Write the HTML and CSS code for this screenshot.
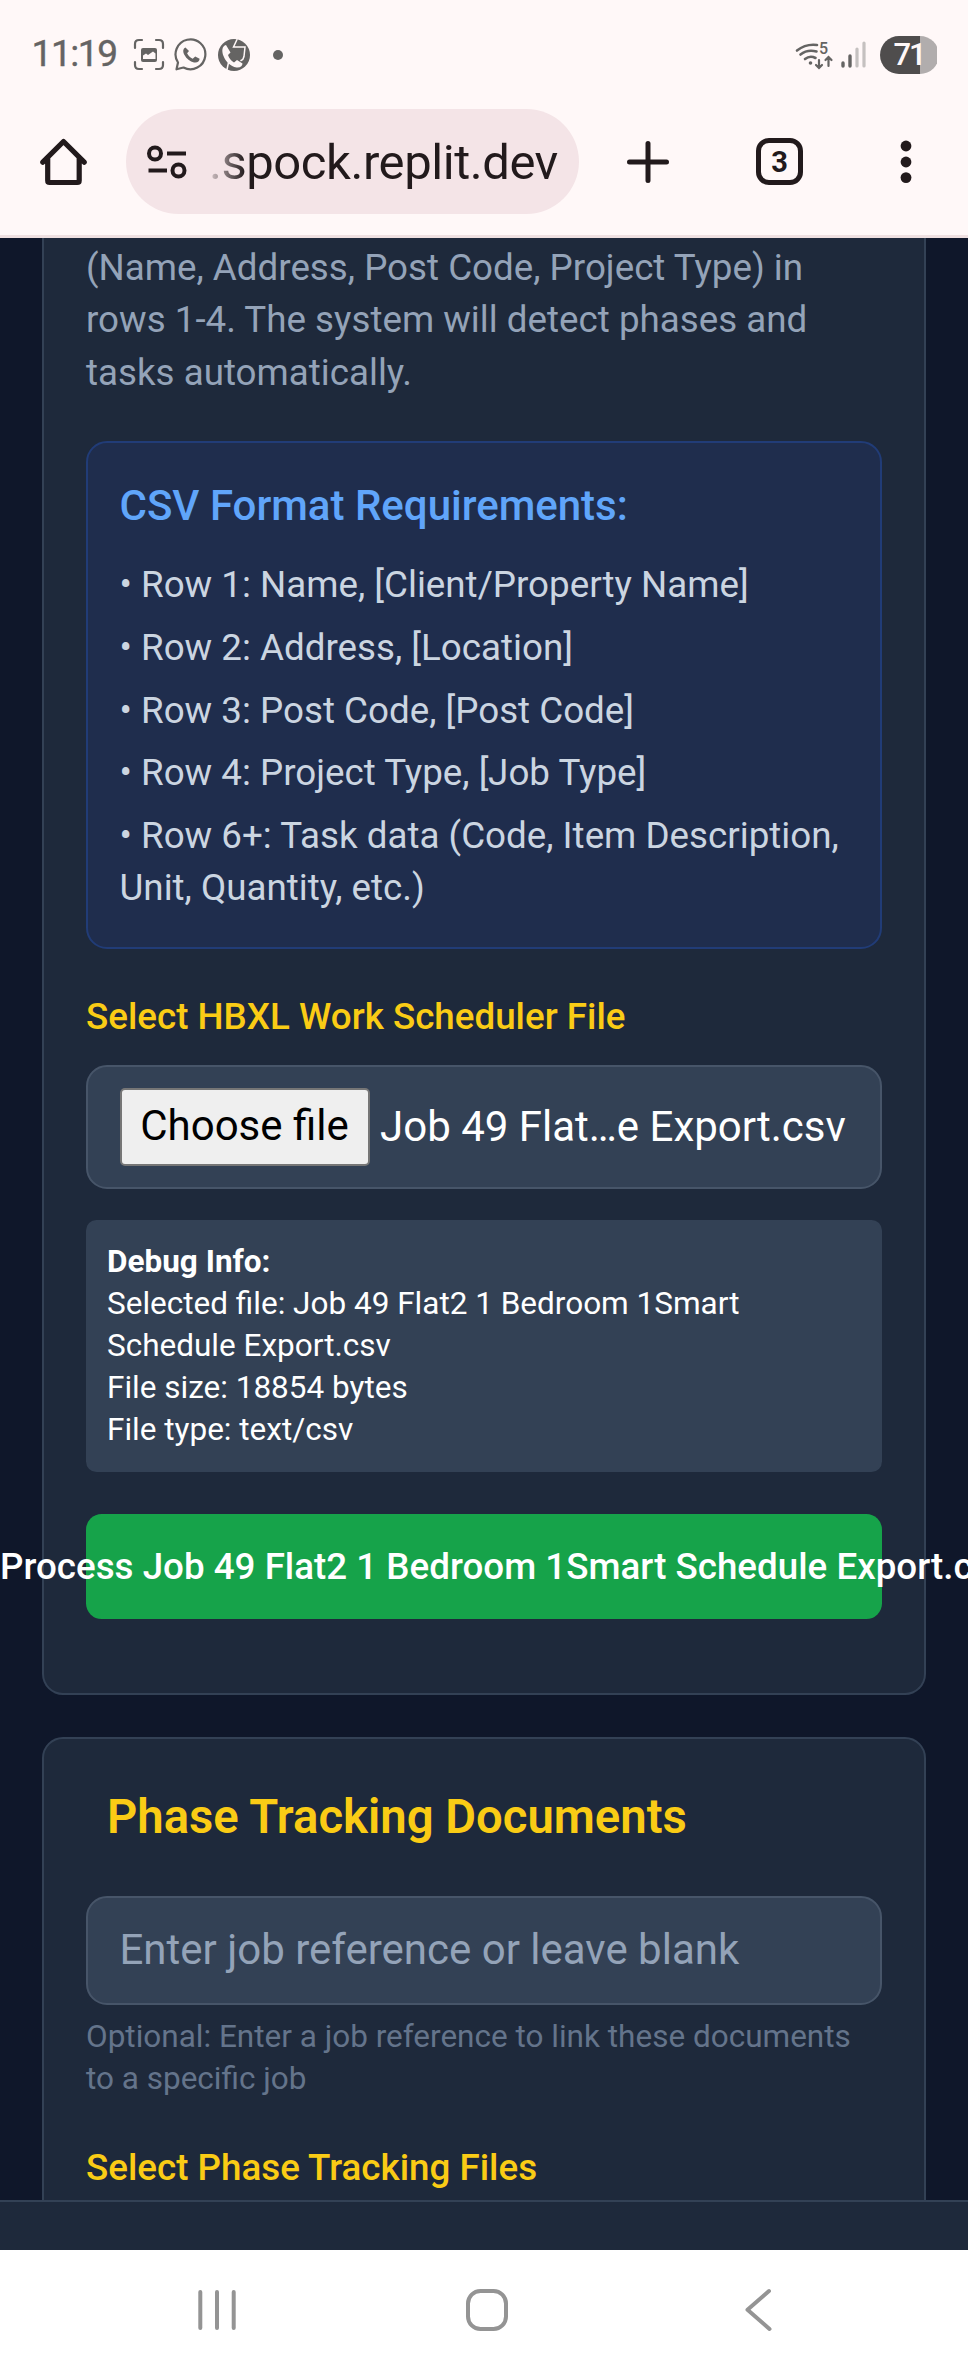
FILE: index.html
```html
<!DOCTYPE html>
<html lang="en">
<head>
<meta charset="utf-8">
<meta name="viewport" content="width=device-width, initial-scale=1">
<title>Upload</title>
<link rel="stylesheet" href="styles.css">
</head>
<body>
<div class="screen">
  <header class="chrome">
    <div class="status">
      <span class="clock">11:19</span>
      <svg class="s-left" width="152" height="34" viewBox="0 0 152 34" fill="none" stroke="#656463" stroke-width="2.2" stroke-linecap="round">
        <path d="M2 10V6q0-4 4-4h3M23 2h3q4 0 4 4v4M30 24v3q0 4-4 4h-3M9 31H6q-4 0-4-4v-3"/>
        <rect x="8" y="10" width="16" height="14" rx="2" fill="#656463" stroke="none"/>
        <path d="M10 21v-3.500l3-2 2 1.500 5-3.500 2.500 2V21z" fill="#fff8f8" stroke="none"/>
        <path d="M43.500 31.300 45 24.500A14.900 14.900 0 1 1 50.500 29.500z" stroke-linejoin="round"/>
        <path d="M52.500 9.500c-2.500 1-3 4-1 7.500 2 3.800 5.500 6.500 9.500 7.500 3.500.6 5.500-1.200 5.600-3.800l-4.400-2.300-2.500 2.400c-2.500-1-4.500-3-5.600-5.500l1.900-2.300z" fill="#656463" stroke="none"/>
        <circle cx="101" cy="17" r="16" fill="#656463" stroke="none"/>
        <path d="M93 7c-4 1-4.500 6-2.500 11 2 5.500 7 10.500 13 11.500 4 .5 6-2 6-4l-5.500-3.500-3 2.500c-3-1.500-5-4.500-6-7.500l2.500-2.500z" fill="#fff8f8" stroke="none"/>
        <path d="M104 1.500l-3.500 7.500h11.500l-1 9.500c-.5 2.500-1.500 3.500-3 4M95.500 24.500l-1.500 7" stroke="#fff8f8" stroke-width="1.500"/>
        <circle cx="145" cy="17" r="5" fill="#656463" stroke="none"/>
      </svg>
      <svg class="s-right" width="142" height="38" viewBox="0 0 142 38" fill="none" stroke="#656463" stroke-width="2.600" stroke-linecap="round">
        <path d="M2 14.500q9-7 20-5.500M5.500 18.500q7-5.500 16-3M10 23q5-4 10.500-1"/>
        <circle cx="15.500" cy="27" r="1.800" fill="#656463" stroke="none"/>
        <path d="M24 24v7.500M21 29l3 3 3-3M33.500 30v-8M30.500 24l3-3 3 3" stroke-width="2.200"/>
        <text x="24" y="18" font-size="16" font-weight="500" fill="#656463" stroke="none">5</text>
        <path d="M48 27v3M55 20v10" stroke-width="3.400"/>
        <path d="M62 13v17M69 7v23" stroke="#c5c1c0" stroke-width="3.200"/>
        <path d="M104 0h21v38h-21a19 19 0 0 1 0-38z" fill="#4f4d4d" stroke="none"/>
        <path d="M125 0a19 19 0 0 1 0 38z" fill="#b1adad" stroke="none"/>
        <text x="98.500" y="28.800" font-size="31" font-weight="500" letter-spacing="-2" fill="#fff8f8" stroke="none">71</text>
      </svg>
    </div>
    <div class="toolbar">
      <svg class="home" width="48" height="48" viewBox="0 0 48 48" fill="none" stroke="#221a1c" stroke-width="5.200" stroke-linecap="round" stroke-linejoin="round"><path d="M2.800 24.200 23.500 3.500l20.700 20.700M7.700 20v22.500q0 2 2 2h27.500q2 0 2-2V20"/></svg>
      <div class="omnibox">
        <svg width="40" height="34" viewBox="0 0 40 34" fill="none" stroke="#221a1c" stroke-width="4"><circle cx="8" cy="8.500" r="6"/><path d="M20 8.500h19M1.500 25.500h18.500"/><circle cx="31.500" cy="25.500" r="6"/></svg>
        <span class="url">.spock.replit.dev</span>
      </div>
      <svg class="plus" width="42" height="42" viewBox="0 0 42 42" stroke="#221a1c" stroke-width="5" stroke-linecap="round"><path d="M21 2.500v37M2.500 21h37"/></svg>
      <span class="tabs">3</span>
      <svg class="dots" width="12" height="44" viewBox="0 0 12 44" fill="#221a1c"><circle cx="6" cy="6" r="5.400"/><circle cx="6" cy="22" r="5.400"/><circle cx="6" cy="37.600" r="5.400"/></svg>
    </div>
  </header>

  <main class="page">
    <section class="card card-import">
      <p class="intro">(Name, Address, Post Code, Project Type) in<br>rows 1-4. The system will detect phases and<br>tasks automatically.</p>
      <div class="format">
        <h3>CSV Format Requirements:</h3>
        <ul>
          <li>• Row 1: Name, [Client/Property Name]</li>
          <li>• Row 2: Address, [Location]</li>
          <li>• Row 3: Post Code, [Post Code]</li>
          <li>• Row 4: Project Type, [Job Type]</li>
          <li>• Row 6+: Task data (Code, Item Description,<br>Unit, Quantity, etc.)</li>
        </ul>
      </div>
      <div class="label">Select HBXL Work Scheduler File</div>
      <div class="file">
        <button class="choose">Choose file</button>
        <span>Job 49 Flat…e Export.csv</span>
      </div>
      <div class="debug">
        <strong>Debug Info:</strong>
        <div>Selected file: Job 49 Flat2 1 Bedroom 1Smart<br>Schedule Export.csv</div>
        <div>File size: 18854 bytes</div>
        <div>File type: text/csv</div>
      </div>
      <button class="process"><span>Process Job 49 Flat2 1 Bedroom 1Smart Schedule Export.csv</span></button>
    </section>

    <section class="card card-phase">
      <h2>Phase Tracking Documents</h2>
      <input class="job" type="text" placeholder="Enter job reference or leave blank">
      <p class="hint">Optional: Enter a job reference to link these documents<br>to a specific job</p>
      <div class="label">Select Phase Tracking Files</div>
    </section>
  </main>

  <div class="tabbar"></div>
  <nav class="sysnav">
    <svg width="968" height="126" viewBox="0 0 968 126" fill="none" stroke="#949494" stroke-width="4" stroke-linecap="round" stroke-linejoin="round">
      <path d="M200.300 42v36M217 42v36M233.700 42v36"/>
      <rect x="468" y="41" width="38" height="38" rx="12.500"/>
      <path d="M769 41 747.500 59.700 769.500 79"/>
    </svg>
  </nav>
</div>
</body>
</html>
```

FILE: styles.css
```css
* { box-sizing: border-box; margin: 0; padding: 0; }
body { font-family: Roboto, "Liberation Sans", sans-serif; background: #0f172a; }
.screen { width: 968px; height: 2376px; display: flex; flex-direction: column; overflow: hidden; background: #0f172a; }

.chrome { flex: none; height: 238px; background: #fff8f8; border-bottom: 3px solid #efe0e1; }
.status { height: 109px; display: flex; align-items: flex-start; padding: 36px 31px 0 31.500px; color: #656463; }
.clock { width: 101.500px; font-size: 37px; line-height: 35px; letter-spacing: -1.400px; font-weight: 400; -webkit-text-stroke: .4px #656463; }
.s-left { margin-top: 2px; }
.s-right { margin-left: auto; }
.toolbar { height: 105px; display: flex; align-items: center; }
.home { margin-left: 40px; }
.omnibox { width: 453px; height: 105px; margin-left: 38px; border-radius: 53px; background: #f4e4e7; display: flex; align-items: center; padding-left: 21px; }
.url { margin-left: 22px; padding-top: 2px; font-size: 49px; line-height: 60px; letter-spacing: -.450px; color: transparent; background: linear-gradient(90deg, rgba(34,26,28,.15), #221a1c 36px); -webkit-background-clip: text; background-clip: text; white-space: nowrap; }
.plus { margin-left: 47.500px; }
.tabs { margin-left: 87.500px; width: 47px; height: 47px; border: 5px solid #221a1c; border-radius: 13px; color: #221a1c; font-size: 29px; font-weight: 700; line-height: 38px; text-align: center; }
.dots { margin-left: 97px; }

.page { flex: none; height: 1962px; overflow: hidden; padding: 0 42px; display: flex; flex-direction: column; gap: 42px; }
.card { flex: none; background: #1e293b; border: 2px solid #334155; border-radius: 21px; padding: 0 42px; }
.card-import { height: 1457px; border-top: 0; border-radius: 0 0 21px 21px; padding-top: 3.700px; }
.intro { font-size: 36.750px; line-height: 52.500px; color: #94a3b8; white-space: nowrap; }
.format { margin-top: 41.800px; height: 508px; padding: 31px 31.500px; border: 2px solid #213c77; border-radius: 21px; background: #1f2d4d; }
.format h3 { font-size: 42px; line-height: 63px; font-weight: 500; color: #60a5fa; }
.format ul { margin-top: 22px; list-style: none; display: flex; flex-direction: column; gap: 10.500px; font-size: 36.750px; line-height: 52.300px; color: #cbd5e1; white-space: nowrap; }
.label { font-size: 36.750px; line-height: 52.500px; font-weight: 500; color: #facc15; }
.format + .label { margin-top: 42px; }
.file { margin-top: 21.500px; height: 124px; padding: 0 31.500px; border: 2px solid #475569; border-radius: 21px; background: #334155; display: flex; align-items: center; color: #fff; font-size: 42px; white-space: nowrap; }
.file span { padding-bottom: 1px; }
.choose { width: 250px; height: 78px; margin-right: 10.500px; border: 2px solid #767676; border-radius: 5px; background: #efefef; color: #000; font: 400 42px/72px Roboto, sans-serif; padding-bottom: 2px; }
.debug { margin-top: 31px; height: 252px; padding: 21px; border-radius: 10.500px; background: #334155; color: #fff; font-size: 31.500px; line-height: 42px; }
.debug strong { display: block; font-weight: 700; }
.process { display: flex; align-items: center; margin-top: 42px; width: 100%; height: 105px; border: 0; border-radius: 15.750px; background: #16a34a; color: #fff; font: 500 36.750px/52.500px Roboto, sans-serif; }
.process span { flex: none; margin-left: -86px; padding-top: 1px; white-space: nowrap; }

.card-phase { height: 600px; padding-top: 42px; }
.card-phase h2 { padding-left: 21px; font-size: 47.250px; line-height: 73.500px; font-weight: 600; color: #facc15; white-space: nowrap; }
.job { display: block; width: 100%; height: 109px; margin-top: 41.500px; padding: 0 31.500px 2px; border: 2px solid #475569; border-radius: 21px; background: #334155; font: 400 42px/63px Roboto, sans-serif; color: #fff; }
.job::placeholder { color: #94a3b8; opacity: 1; }
.hint { margin-top: 10.500px; font-size: 31.500px; line-height: 42px; color: #64748b; white-space: nowrap; }
.card-phase .label { margin-top: 42px; }

.tabbar { flex: none; height: 50px; background: #1e293b; border-top: 2px solid #334155; }
.sysnav { flex: none; height: 126px; background: #fff; }
.sysnav svg { display: block; }
```
